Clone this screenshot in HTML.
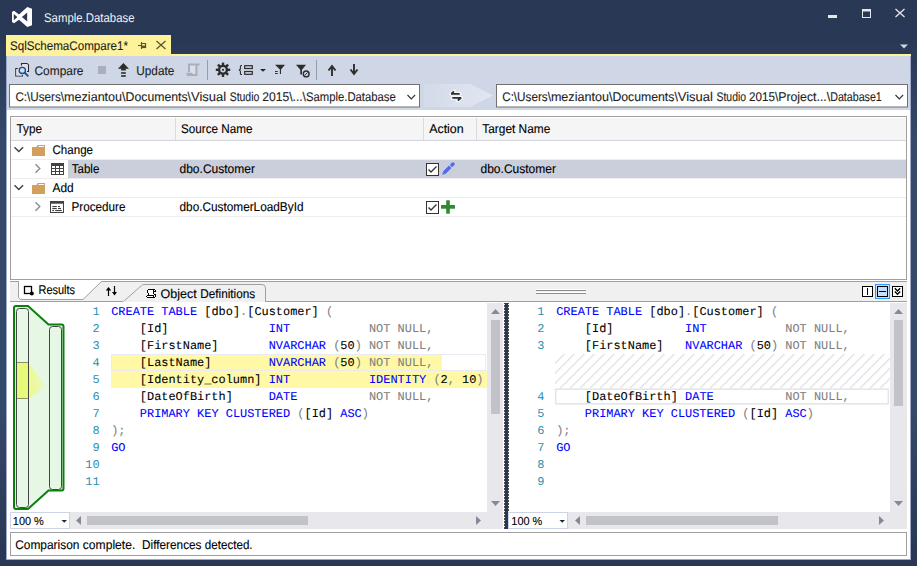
<!DOCTYPE html><html><head><meta charset="utf-8"><style>html,body{margin:0;padding:0;background:#293955;overflow:hidden}svg{display:block}</style></head><body><svg width="917" height="566" viewBox="0 0 917 566" text-rendering="geometricPrecision"><defs><linearGradient id="envg" x1="0" x2="0" y1="0" y2="566" gradientUnits="userSpaceOnUse"><stop offset="0.07" stop-color="#293955"/><stop offset="0.25" stop-color="#35496A"/><stop offset="0.72" stop-color="#35496A"/><stop offset="0.97" stop-color="#293955"/></linearGradient></defs>
<rect x="0" y="0" width="917" height="566" fill="url(#envg)" />
<rect x="0" y="0" width="917" height="35" fill="#293955" />
<path d="M27.3,7 L32,8.7 V25.2 L27.3,27 L19,19.8 L14,23.2 L12,22 V12 L14,10.8 L19,14.6 Z M27.2,12.4 V21.6 L21.9,17 Z M13.8,13.9 V20.3 L17.3,17.1 Z" fill="#FFFFFF" fill-rule="evenodd"/>
<text x="44" y="22" font-family="Liberation Sans" font-size="12.6" fill="#F1F1F1" stroke="#F1F1F1" stroke-width="0" textLength="90.5" lengthAdjust="spacingAndGlyphs" >Sample.Database</text>
<rect x="828" y="15" width="9" height="3" fill="#E6E7EA" />
<rect x="862.5" y="9.5" width="8" height="8" fill="none" stroke="#E6E7EA" stroke-width="1"/>
<rect x="862" y="9" width="9" height="2.5" fill="#E6E7EA" />
<path d="M895.5,9 L904.5,17 M904.5,9 L895.5,17" stroke="#E6E7EA" stroke-width="1.3"/>
<rect x="6" y="35" width="165" height="21" fill="#FFF29D" />
<rect x="6" y="54" width="905" height="2" fill="#FFF29D" />
<text x="10" y="50" font-family="Liberation Sans" font-size="12.6" fill="#1E1E1E" stroke="#1E1E1E" stroke-width="0.12" textLength="118" lengthAdjust="spacingAndGlyphs" >SqlSchemaCompare1*</text>
<path d="M138,45.5 H141.5 M141.5,42 V49 M141.5,43.5 H145.5 V47.5 H141.5" stroke="#5B5530" stroke-width="1.2" fill="none"/>
<rect x="141" y="45.6" width="5.1" height="2.5" fill="#5B5530" />
<path d="M156.5,41 L165.5,49 M165.5,41 L156.5,49" stroke="#5B5530" stroke-width="1.3"/>
<path d="M900,44.5 H908 L904,48.5 Z" fill="#CED4DD"/>
<rect x="6" y="56" width="905" height="504" fill="#FFFFFF" />
<rect x="6" y="56" width="905" height="54" fill="#CFD6E5" />
<rect x="6" y="56" width="1" height="504" fill="#9DA9C9" />
<rect x="910" y="56" width="1" height="504" fill="#9DA9C9" />
<rect x="6" y="559" width="905" height="1" fill="#9DA9C9" />
<path d="M21.5,65.5 V63.5 H27 L28.5,65 V71.5 H27" fill="none" stroke="#2A2A2A" stroke-width="1.1"/>
<path d="M17.8,68.5 H15.8 V76 H22.4 V75" fill="none" stroke="#2A2A2A" stroke-width="1.1"/>
<path d="M16.3,69 H22 V75.5 H16.3 Z M22,64 H27 L28,65 V71 H22 Z" fill="#DCDEE8"/>
<circle cx="22.3" cy="70.4" r="3.1" fill="#DADDE6" stroke="#0A4AA6" stroke-width="1.3"/>
<path d="M24.6,72.7 L28.3,76.4" stroke="#0A4AA6" stroke-width="1.7"/>
<text x="34.5" y="75" font-family="Liberation Sans" font-size="12.6" fill="#1E1E1E" stroke="#1E1E1E" stroke-width="0.12" textLength="49" lengthAdjust="spacingAndGlyphs" >Compare</text>
<rect x="98" y="66" width="8" height="8" fill="#A9AEBB" />
<path d="M123.4,63 L129,68.7 H125.8 V70.6 H121.1 V68.7 H117.9 Z" fill="#2D2D2D"/>
<rect x="121.1" y="72.2" width="4.7" height="1.6" fill="#2D2D2D" />
<rect x="121.1" y="75.2" width="4.7" height="1.6" fill="#2D2D2D" />
<text x="136.3" y="75" font-family="Liberation Sans" font-size="12.6" fill="#1E1E1E" stroke="#1E1E1E" stroke-width="0.12" textLength="38" lengthAdjust="spacingAndGlyphs" >Update</text>
<path d="M190,65 H196 V74.5 H191 V72 H189 V65 Z" fill="#DCDFE8"/>
<path d="M189,72 V64.5 H199.5 M196.4,65.5 V75 H187 M186.5,73.8 H192.5" fill="none" stroke="#A9AEBC" stroke-width="2"/>
<rect x="207" y="60" width="1" height="20" fill="#939CB0" />
<rect x="221.8" y="62.6" width="2.4" height="3.5" fill="#2D2D2D" transform="rotate(0 223 69.8)"/><rect x="221.8" y="62.6" width="2.4" height="3.5" fill="#2D2D2D" transform="rotate(45 223 69.8)"/><rect x="221.8" y="62.6" width="2.4" height="3.5" fill="#2D2D2D" transform="rotate(90 223 69.8)"/><rect x="221.8" y="62.6" width="2.4" height="3.5" fill="#2D2D2D" transform="rotate(135 223 69.8)"/><rect x="221.8" y="62.6" width="2.4" height="3.5" fill="#2D2D2D" transform="rotate(180 223 69.8)"/><rect x="221.8" y="62.6" width="2.4" height="3.5" fill="#2D2D2D" transform="rotate(225 223 69.8)"/><rect x="221.8" y="62.6" width="2.4" height="3.5" fill="#2D2D2D" transform="rotate(270 223 69.8)"/><rect x="221.8" y="62.6" width="2.4" height="3.5" fill="#2D2D2D" transform="rotate(315 223 69.8)"/>
<circle cx="223" cy="69.8" r="5.1" fill="#2D2D2D"/>
<circle cx="223" cy="69.8" r="2.7" fill="#CFD6E5"/>
<circle cx="223" cy="69.8" r="1.1" fill="#2D2D2D"/>
<path d="M242,65.5 H241.2 Q240.4,65.5 240.4,66.5 V69 L239.3,70 L240.4,71 V73.5 Q240.4,74.5 241.2,74.5 H242" fill="none" stroke="#2D2D2D" stroke-width="1.1"/>
<rect x="244.7" y="65.7" width="7.6" height="2.8" fill="none" stroke="#2D2D2D" stroke-width="1.2"/>
<rect x="244.7" y="71.5" width="7.6" height="2.8" fill="none" stroke="#2D2D2D" stroke-width="1.2"/>
<path d="M260,69 H266 L263,71.8 Z" fill="#1B2640"/>
<path d="M275,64.8 H285 L281,69.6 V73.9 H279.9 V69.6 Z" fill="#2D2D2D"/>
<rect x="275" y="71" width="2.7" height="1" fill="#2D2D2D" />
<rect x="275" y="73" width="2.7" height="1" fill="#2D2D2D" />
<path d="M296,64.8 H306 L302,69.8 V74.6 H300.3 V69.8 Z" fill="#2D2D2D"/>
<circle cx="306.2" cy="73.9" r="2.9" fill="#CFD6E5" stroke="#2D2D2D" stroke-width="1.4"/>
<path d="M304.6,75.5 L307.8,72.3" stroke="#2D2D2D" stroke-width="1"/>
<rect x="316" y="60" width="1" height="20" fill="#939CB0" />
<path d="M332,76 V66.5 M328.5,70.5 L332,66 L335.5,70.5" fill="none" stroke="#2D2D2D" stroke-width="1.9"/>
<path d="M354,64 V74 M350.5,69.5 L354,74 L357.5,69.5" fill="none" stroke="#2D2D2D" stroke-width="1.9"/>
<rect x="9.5" y="84.5" width="410" height="22.5" fill="#FFFFFF" stroke="#717171" stroke-width="1"/>
<text x="15.4" y="101" font-family="Liberation Sans" font-size="12.6" fill="#1E1E1E" stroke="#1E1E1E" stroke-width="0.12" textLength="48.7" lengthAdjust="spacingAndGlyphs" xml:space="preserve">C:\Users\</text>
<text x="64.1" y="101" font-family="Liberation Sans" font-size="12.6" fill="#1E1E1E" stroke="#1E1E1E" stroke-width="0.12" textLength="61.5" lengthAdjust="spacingAndGlyphs" xml:space="preserve">meziantou\</text>
<text x="125.6" y="101" font-family="Liberation Sans" font-size="12.6" fill="#1E1E1E" stroke="#1E1E1E" stroke-width="0.12" textLength="65.4" lengthAdjust="spacingAndGlyphs" xml:space="preserve">Documents\</text>
<text x="191.0" y="101" font-family="Liberation Sans" font-size="12.6" fill="#1E1E1E" stroke="#1E1E1E" stroke-width="0.12" textLength="38.7" lengthAdjust="spacingAndGlyphs" xml:space="preserve">Visual </text>
<text x="229.7" y="101" font-family="Liberation Sans" font-size="12.6" fill="#1E1E1E" stroke="#1E1E1E" stroke-width="0.12" textLength="32.5" lengthAdjust="spacingAndGlyphs" xml:space="preserve">Studio </text>
<text x="262.2" y="101" font-family="Liberation Sans" font-size="12.6" fill="#1E1E1E" stroke="#1E1E1E" stroke-width="0.12" textLength="43.8" lengthAdjust="spacingAndGlyphs" xml:space="preserve">2015\...\</text>
<text x="306.0" y="101" font-family="Liberation Sans" font-size="12.6" fill="#1E1E1E" stroke="#1E1E1E" stroke-width="0.12" textLength="89.8" lengthAdjust="spacingAndGlyphs" xml:space="preserve">Sample.Database</text>
<path d="M407.5,95 L411.3,99 L415.1,95" fill="none" stroke="#333" stroke-width="1.1"/>
<defs><linearGradient id="arw" x1="0" x2="1" y1="0" y2="0"><stop offset="0" stop-color="#D3DAE8"/><stop offset="1" stop-color="#E2E7F1"/></linearGradient></defs>
<path d="M424,84 H470 L493,95.5 L470,107 H424 Z" fill="url(#arw)"/>
<path d="M451,93.8 H459.7 M451.2,93.8 L454,91.3 M461.3,97.9 H452.3 M461.1,97.9 L457.7,100.5" fill="none" stroke="#FFFFFF" stroke-width="3.6" stroke-linecap="round" opacity="0.8"/>
<path d="M451,93.8 H459.7 M451.2,93.8 L454,91.3 M461.3,97.9 H452.3 M461.1,97.9 L457.7,100.5" fill="none" stroke="#2D2D2D" stroke-width="1.8"/>
<rect x="496.5" y="84.5" width="411" height="22.5" fill="#FFFFFF" stroke="#717171" stroke-width="1"/>
<text x="502.2" y="101" font-family="Liberation Sans" font-size="12.6" fill="#1E1E1E" stroke="#1E1E1E" stroke-width="0.12" textLength="48.7" lengthAdjust="spacingAndGlyphs" xml:space="preserve">C:\Users\</text>
<text x="550.9" y="101" font-family="Liberation Sans" font-size="12.6" fill="#1E1E1E" stroke="#1E1E1E" stroke-width="0.12" textLength="61.5" lengthAdjust="spacingAndGlyphs" xml:space="preserve">meziantou\</text>
<text x="612.4" y="101" font-family="Liberation Sans" font-size="12.6" fill="#1E1E1E" stroke="#1E1E1E" stroke-width="0.12" textLength="65.4" lengthAdjust="spacingAndGlyphs" xml:space="preserve">Documents\</text>
<text x="677.8" y="101" font-family="Liberation Sans" font-size="12.6" fill="#1E1E1E" stroke="#1E1E1E" stroke-width="0.12" textLength="38.7" lengthAdjust="spacingAndGlyphs" xml:space="preserve">Visual </text>
<text x="716.5" y="101" font-family="Liberation Sans" font-size="12.6" fill="#1E1E1E" stroke="#1E1E1E" stroke-width="0.12" textLength="32.5" lengthAdjust="spacingAndGlyphs" xml:space="preserve">Studio </text>
<text x="749.0" y="101" font-family="Liberation Sans" font-size="12.6" fill="#1E1E1E" stroke="#1E1E1E" stroke-width="0.12" textLength="29.2" lengthAdjust="spacingAndGlyphs" xml:space="preserve">2015\</text>
<text x="778.2" y="101" font-family="Liberation Sans" font-size="12.6" fill="#1E1E1E" stroke="#1E1E1E" stroke-width="0.12" textLength="52.0" lengthAdjust="spacingAndGlyphs" xml:space="preserve">Project...\</text>
<text x="830.2" y="101" font-family="Liberation Sans" font-size="12.6" fill="#1E1E1E" stroke="#1E1E1E" stroke-width="0.12" textLength="51.6" lengthAdjust="spacingAndGlyphs" xml:space="preserve">Database1</text>
<path d="M895.5,95 L899.3,99 L903.1,95" fill="none" stroke="#333" stroke-width="1.1"/>
<rect x="10.5" y="116.5" width="896" height="163" fill="#FFFFFF" stroke="#A0A0A0" stroke-width="1"/>
<rect x="11" y="117" width="895" height="23" fill="#F5F5F5" />
<rect x="11" y="117" width="895" height="1" fill="#FFFFFF" />
<rect x="11" y="140" width="895" height="1" fill="#D3D5E0" />
<rect x="175" y="118" width="1" height="22" fill="#DADAE2" />
<rect x="423" y="118" width="1" height="22" fill="#DADAE2" />
<rect x="476" y="118" width="1" height="22" fill="#DADAE2" />
<text x="16.5" y="133" font-family="Liberation Sans" font-size="12.6" fill="#000000" stroke="#000000" stroke-width="0.12" textLength="25.5" lengthAdjust="spacingAndGlyphs" >Type</text>
<text x="181" y="133" font-family="Liberation Sans" font-size="12.6" fill="#000000" stroke="#000000" stroke-width="0.12" textLength="71.5" lengthAdjust="spacingAndGlyphs" >Source Name</text>
<text x="429.2" y="133" font-family="Liberation Sans" font-size="12.6" fill="#000000" stroke="#000000" stroke-width="0.12" textLength="34.5" lengthAdjust="spacingAndGlyphs" >Action</text>
<text x="482.3" y="133" font-family="Liberation Sans" font-size="12.6" fill="#000000" stroke="#000000" stroke-width="0.12" textLength="68" lengthAdjust="spacingAndGlyphs" >Target Name</text>
<rect x="11" y="159" width="895" height="1" fill="#EDEDED" />
<rect x="11" y="178" width="895" height="1" fill="#EDEDED" />
<rect x="11" y="197" width="895" height="1" fill="#EDEDED" />
<rect x="11" y="216" width="895" height="1" fill="#EDEDED" />
<rect x="68" y="160" width="838" height="18" fill="#CBCEDB" />
<path d="M14.5,147.2 L18.8,151.5 L23.1,147.2" fill="none" stroke="#404040" stroke-width="1.4"/>
<path d="M32,147 H36.4 L37.6,145 H45 V156 H32 Z" fill="#D29F5E"/>
<rect x="38.5" y="146" width="5.5" height="1" fill="#FFFFFF" />
<text x="52.5" y="154" font-family="Liberation Sans" font-size="12.6" fill="#000000" stroke="#000000" stroke-width="0.12" textLength="40.5" lengthAdjust="spacingAndGlyphs" >Change</text>
<path d="M35.5,164.2 L39.8,168.5 L35.5,172.79999999999998" fill="none" stroke="#8C8C8C" stroke-width="1.4"/>
<rect x="51" y="163" width="13" height="12" fill="#424242" />
<rect x="52" y="166" width="3" height="2" fill="#FFFFFF" />
<rect x="52" y="169" width="3" height="2" fill="#FFFFFF" />
<rect x="52" y="172" width="3" height="2" fill="#FFFFFF" />
<rect x="56" y="166" width="3" height="2" fill="#FFFFFF" />
<rect x="56" y="169" width="3" height="2" fill="#FFFFFF" />
<rect x="56" y="172" width="3" height="2" fill="#FFFFFF" />
<rect x="60" y="166" width="3" height="2" fill="#FFFFFF" />
<rect x="60" y="169" width="3" height="2" fill="#FFFFFF" />
<rect x="60" y="172" width="3" height="2" fill="#FFFFFF" />
<text x="71.8" y="173" font-family="Liberation Sans" font-size="12.6" fill="#000000" stroke="#000000" stroke-width="0.12" textLength="27.5" lengthAdjust="spacingAndGlyphs" >Table</text>
<text x="179.5" y="173" font-family="Liberation Sans" font-size="12.6" fill="#000000" stroke="#000000" stroke-width="0.12" textLength="75.5" lengthAdjust="spacingAndGlyphs" >dbo.Customer</text>
<text x="480.5" y="173" font-family="Liberation Sans" font-size="12.6" fill="#000000" stroke="#000000" stroke-width="0.12" textLength="75.5" lengthAdjust="spacingAndGlyphs" >dbo.Customer</text>
<path d="M14.5,185.2 L18.8,189.5 L23.1,185.2" fill="none" stroke="#404040" stroke-width="1.4"/>
<path d="M32,185 H36.4 L37.6,183 H45 V194 H32 Z" fill="#D29F5E"/>
<rect x="38.5" y="184" width="5.5" height="1" fill="#FFFFFF" />
<text x="52.5" y="192" font-family="Liberation Sans" font-size="12.6" fill="#000000" stroke="#000000" stroke-width="0.12" textLength="21.2" lengthAdjust="spacingAndGlyphs" >Add</text>
<path d="M35.5,202.2 L39.8,206.5 L35.5,210.79999999999998" fill="none" stroke="#8C8C8C" stroke-width="1.4"/>
<rect x="50.5" y="201.5" width="13" height="11" fill="#FFFFFF" stroke="#424242" stroke-width="1"/>
<rect x="50" y="201" width="14" height="2.7" fill="#424242" />
<rect x="52.3" y="206" width="4.5" height="1.1" fill="#424242" />
<rect x="58" y="206" width="2" height="1.1" fill="#424242" />
<rect x="52.3" y="208" width="4.5" height="1.1" fill="#424242" />
<rect x="58" y="208" width="3" height="1.1" fill="#424242" />
<rect x="52.3" y="210" width="1.7000000000000028" height="1.1" fill="#424242" />
<rect x="55.2" y="210" width="6.599999999999994" height="1.1" fill="#424242" />
<text x="71.5" y="211" font-family="Liberation Sans" font-size="12.6" fill="#000000" stroke="#000000" stroke-width="0.12" textLength="54" lengthAdjust="spacingAndGlyphs" >Procedure</text>
<text x="179.5" y="211" font-family="Liberation Sans" font-size="12.6" fill="#000000" stroke="#000000" stroke-width="0.12" textLength="124" lengthAdjust="spacingAndGlyphs" >dbo.CustomerLoadById</text>
<rect x="426.5" y="163.5" width="12" height="12" fill="#FFFFFF" stroke="#333333" stroke-width="1"/>
<path d="M428.5,169.5 L431,172 L436.5,166.5" fill="none" stroke="#333333" stroke-width="1.4"/>
<rect x="426.5" y="201.5" width="12" height="12" fill="#FFFFFF" stroke="#333333" stroke-width="1"/>
<path d="M428.5,207.5 L431,210 L436.5,204.5" fill="none" stroke="#333333" stroke-width="1.4"/>
<path d="M442.2,174.8 L442.9,171.9 L445.1,174.1 Z" fill="#4F6BED"/>
<path d="M444,173 L450.2,166.8" stroke="#4F6BED" stroke-width="3.4"/>
<path d="M452,165 L453,164" stroke="#4F6BED" stroke-width="3.4" stroke-linecap="round"/>
<rect x="441" y="205" width="14" height="3.7" fill="#2E8B2E" />
<rect x="446.2" y="200.3" width="3.6" height="13.4" fill="#2E8B2E" />
<rect x="10" y="280" width="897" height="1" fill="#FFFFFF" />
<rect x="10" y="281" width="897" height="21" fill="#F0F0F0" />
<rect x="10" y="281" width="897" height="1" fill="#A0A0A0" />
<path d="M18.5,281 V297.5 L20.5,299.5 H83 L101.5,281.5" fill="#FFFFFF" stroke="#A0A0A0" stroke-width="1"/>
<rect x="19" y="280" width="82" height="2" fill="#FFFFFF" />
<rect x="10" y="301" width="113" height="1" fill="#A0A0A0" />
<rect x="265" y="301" width="642" height="1" fill="#A0A0A0" />
<path d="M123.5,301.5 L141.5,285.5 Q142.5,284.5 144,284.5 H262 Q265.5,284.5 265.5,288 V301.5" fill="#F0F0F0" stroke="#A0A0A0" stroke-width="1"/>
<rect x="124" y="301" width="141" height="1" fill="#F0F0F0" />
<rect x="24.5" y="286.5" width="7" height="7" fill="#FFFFFF" stroke="#000" stroke-width="1.3"/>
<circle cx="31.8" cy="293.4" r="2" fill="#000"/>
<text x="38.5" y="294" font-family="Liberation Sans" font-size="12.6" fill="#000000" stroke="#000000" stroke-width="0.12" textLength="36.5" lengthAdjust="spacingAndGlyphs" >Results</text>
<path d="M108.5,296 V289.5 M114.5,286 V292.5" fill="none" stroke="#000" stroke-width="1.2"/>
<path d="M105.8,290.5 H111.2 L108.5,287 Z M112,292 H117 L114.5,295.5 Z" fill="#000"/>
<rect x="148" y="290" width="5" height="5" fill="#FFFFFF" />
<rect x="147" y="296" width="6" height="1" fill="#FFFFFF" />
<rect x="148" y="289" width="7" height="1" fill="#000000" />
<rect x="147" y="290" width="1" height="3" fill="#000000" />
<rect x="148" y="293" width="1" height="2" fill="#000000" />
<rect x="153" y="290" width="1" height="4" fill="#000000" />
<rect x="155" y="290" width="1" height="1" fill="#000000" />
<rect x="154" y="291" width="2" height="1" fill="#000000" />
<rect x="154" y="294" width="2" height="1" fill="#000000" />
<rect x="147" y="295" width="7" height="1" fill="#000000" />
<rect x="155" y="295" width="1" height="2" fill="#000000" />
<rect x="146" y="296" width="1" height="1" fill="#000000" />
<rect x="153" y="296" width="1" height="1" fill="#000000" />
<rect x="147" y="297" width="8" height="1" fill="#000000" />
<text x="160.5" y="298" font-family="Liberation Sans" font-size="12.6" fill="#000000" stroke="#000000" stroke-width="0.12" textLength="39.7" lengthAdjust="spacingAndGlyphs" xml:space="preserve">Object </text>
<text x="200.2" y="298" font-family="Liberation Sans" font-size="12.6" fill="#000000" stroke="#000000" stroke-width="0.12" textLength="55" lengthAdjust="spacingAndGlyphs" >Definitions</text>
<rect x="536" y="289" width="50" height="1" fill="#FFFFFF" />
<rect x="536" y="290" width="50" height="1" fill="#8C8C8C" />
<rect x="536" y="292" width="50" height="1" fill="#FFFFFF" />
<rect x="536" y="293" width="50" height="1" fill="#8C8C8C" />
<rect x="862.5" y="286.5" width="10" height="10" fill="#FFFFFF" stroke="#000" stroke-width="1"/>
<rect x="867" y="288" width="1" height="7" fill="#000" />
<rect x="875.5" y="284.5" width="14" height="14" fill="#C5E0FC" stroke="#3399FF" stroke-width="1"/>
<rect x="877.5" y="286.5" width="10" height="10" fill="#C5E0FC" stroke="#000" stroke-width="1"/>
<rect x="879" y="291" width="7" height="1" fill="#000" />
<rect x="892.5" y="286.5" width="10" height="10" fill="#FFFFFF" stroke="#000" stroke-width="1"/>
<path d="M894.8,288.3 L897.5,291 L900.2,288.3 M894.8,291.6 L897.5,294.3 L900.2,291.6" fill="none" stroke="#000" stroke-width="1.4"/>
<rect x="111" y="354" width="331" height="17" fill="#FFF9A6" />
<rect x="111" y="371" width="376" height="17" fill="#FFF9A6" />
<rect x="111.5" y="354.5" width="374" height="16" fill="none" stroke="#EAEAF2" stroke-width="1"/>
<path d="M14,308 Q14,306 16,306 H28 L48.5,324.5 H61.5 Q63.5,324.5 63.5,326.5 V488.5 Q63.5,490.5 61.5,490.5 H48.5 L28,509 H16 Q14,509 14,507 Z" fill="#E6F7E6" stroke="#0B800B" stroke-width="2"/>
<rect x="16.5" y="308.5" width="12" height="199" rx="3" fill="#E6F7E6" stroke="#444" stroke-width="1"/>
<rect x="49.5" y="326.5" width="12" height="163" rx="3" fill="#E6F7E6" stroke="#444" stroke-width="1"/>
<defs><linearGradient id="gy" x1="0" x2="1" y1="0" y2="0"><stop offset="0" stop-color="#EEFA80" stop-opacity="0.9"/><stop offset="1" stop-color="#EEFA80" stop-opacity="0.15"/></linearGradient><pattern id="hatch" width="7.07" height="10" patternUnits="userSpaceOnUse" patternTransform="translate(553.5 354) rotate(45)"><rect x="0" y="0" width="1.2" height="10" fill="#DEDFE6"/></pattern></defs>
<path d="M29,364 L46.5,387 L29,398 Z" fill="url(#gy)"/>
<rect x="17" y="363" width="11" height="36" fill="#E8F878" />
<rect x="17" y="362" width="11" height="1" fill="#8E9466" />
<rect x="17" y="398" width="11" height="1" fill="#8E9466" />
<text x="99.6" y="315" font-family="Liberation Mono" font-size="11.93" fill="#2B91AF" text-anchor="end">1</text>
<text x="111.20" y="315" font-family="Liberation Mono" font-size="11.93" fill="#0000FF" stroke="#0000FF" stroke-width="0.08" xml:space="preserve">CREATE</text>
<text x="161.32" y="315" font-family="Liberation Mono" font-size="11.93" fill="#0000FF" stroke="#0000FF" stroke-width="0.08" xml:space="preserve">TABLE</text>
<text x="204.28" y="315" font-family="Liberation Mono" font-size="11.93" fill="#000000" stroke="#000000" stroke-width="0.08" xml:space="preserve">[dbo]</text>
<text x="240.08" y="315" font-family="Liberation Mono" font-size="11.93" fill="#808080" stroke="#808080" stroke-width="0.08" xml:space="preserve">.</text>
<text x="247.24" y="315" font-family="Liberation Mono" font-size="11.93" fill="#000000" stroke="#000000" stroke-width="0.08" xml:space="preserve">[Customer]</text>
<text x="326.00" y="315" font-family="Liberation Mono" font-size="11.93" fill="#808080" stroke="#808080" stroke-width="0.08" xml:space="preserve">(</text>
<text x="99.6" y="332" font-family="Liberation Mono" font-size="11.93" fill="#2B91AF" text-anchor="end">2</text>
<text x="139.84" y="332" font-family="Liberation Mono" font-size="11.93" fill="#000000" stroke="#000000" stroke-width="0.08" xml:space="preserve">[Id]</text>
<text x="268.72" y="332" font-family="Liberation Mono" font-size="11.93" fill="#0000FF" stroke="#0000FF" stroke-width="0.08" xml:space="preserve">INT</text>
<text x="368.96" y="332" font-family="Liberation Mono" font-size="11.93" fill="#808080" stroke="#808080" stroke-width="0.08" xml:space="preserve">NOT</text>
<text x="397.60" y="332" font-family="Liberation Mono" font-size="11.93" fill="#808080" stroke="#808080" stroke-width="0.08" xml:space="preserve">NULL</text>
<text x="426.24" y="332" font-family="Liberation Mono" font-size="11.93" fill="#808080" stroke="#808080" stroke-width="0.08" xml:space="preserve">,</text>
<text x="99.6" y="349" font-family="Liberation Mono" font-size="11.93" fill="#2B91AF" text-anchor="end">3</text>
<text x="139.84" y="349" font-family="Liberation Mono" font-size="11.93" fill="#000000" stroke="#000000" stroke-width="0.08" xml:space="preserve">[FirstName]</text>
<text x="268.72" y="349" font-family="Liberation Mono" font-size="11.93" fill="#0000FF" stroke="#0000FF" stroke-width="0.08" xml:space="preserve">NVARCHAR</text>
<text x="333.16" y="349" font-family="Liberation Mono" font-size="11.93" fill="#808080" stroke="#808080" stroke-width="0.08" xml:space="preserve">(</text>
<text x="340.32" y="349" font-family="Liberation Mono" font-size="11.93" fill="#000000" stroke="#000000" stroke-width="0.08" xml:space="preserve">50</text>
<text x="354.64" y="349" font-family="Liberation Mono" font-size="11.93" fill="#808080" stroke="#808080" stroke-width="0.08" xml:space="preserve">)</text>
<text x="368.96" y="349" font-family="Liberation Mono" font-size="11.93" fill="#808080" stroke="#808080" stroke-width="0.08" xml:space="preserve">NOT</text>
<text x="397.60" y="349" font-family="Liberation Mono" font-size="11.93" fill="#808080" stroke="#808080" stroke-width="0.08" xml:space="preserve">NULL</text>
<text x="426.24" y="349" font-family="Liberation Mono" font-size="11.93" fill="#808080" stroke="#808080" stroke-width="0.08" xml:space="preserve">,</text>
<text x="99.6" y="366" font-family="Liberation Mono" font-size="11.93" fill="#2B91AF" text-anchor="end">4</text>
<text x="139.84" y="366" font-family="Liberation Mono" font-size="11.93" fill="#000000" stroke="#000000" stroke-width="0.08" xml:space="preserve">[LastName]</text>
<text x="268.72" y="366" font-family="Liberation Mono" font-size="11.93" fill="#0000FF" stroke="#0000FF" stroke-width="0.08" xml:space="preserve">NVARCHAR</text>
<text x="333.16" y="366" font-family="Liberation Mono" font-size="11.93" fill="#808080" stroke="#808080" stroke-width="0.08" xml:space="preserve">(</text>
<text x="340.32" y="366" font-family="Liberation Mono" font-size="11.93" fill="#000000" stroke="#000000" stroke-width="0.08" xml:space="preserve">50</text>
<text x="354.64" y="366" font-family="Liberation Mono" font-size="11.93" fill="#808080" stroke="#808080" stroke-width="0.08" xml:space="preserve">)</text>
<text x="368.96" y="366" font-family="Liberation Mono" font-size="11.93" fill="#808080" stroke="#808080" stroke-width="0.08" xml:space="preserve">NOT</text>
<text x="397.60" y="366" font-family="Liberation Mono" font-size="11.93" fill="#808080" stroke="#808080" stroke-width="0.08" xml:space="preserve">NULL</text>
<text x="426.24" y="366" font-family="Liberation Mono" font-size="11.93" fill="#808080" stroke="#808080" stroke-width="0.08" xml:space="preserve">,</text>
<text x="99.6" y="383" font-family="Liberation Mono" font-size="11.93" fill="#2B91AF" text-anchor="end">5</text>
<text x="139.84" y="383" font-family="Liberation Mono" font-size="11.93" fill="#000000" stroke="#000000" stroke-width="0.08" xml:space="preserve">[Identity_column]</text>
<text x="268.72" y="383" font-family="Liberation Mono" font-size="11.93" fill="#0000FF" stroke="#0000FF" stroke-width="0.08" xml:space="preserve">INT</text>
<text x="368.96" y="383" font-family="Liberation Mono" font-size="11.93" fill="#0000FF" stroke="#0000FF" stroke-width="0.08" xml:space="preserve">IDENTITY</text>
<text x="433.40" y="383" font-family="Liberation Mono" font-size="11.93" fill="#808080" stroke="#808080" stroke-width="0.08" xml:space="preserve">(</text>
<text x="440.56" y="383" font-family="Liberation Mono" font-size="11.93" fill="#000000" stroke="#000000" stroke-width="0.08" xml:space="preserve">2</text>
<text x="447.72" y="383" font-family="Liberation Mono" font-size="11.93" fill="#808080" stroke="#808080" stroke-width="0.08" xml:space="preserve">,</text>
<text x="462.04" y="383" font-family="Liberation Mono" font-size="11.93" fill="#000000" stroke="#000000" stroke-width="0.08" xml:space="preserve">10</text>
<text x="476.36" y="383" font-family="Liberation Mono" font-size="11.93" fill="#808080" stroke="#808080" stroke-width="0.08" xml:space="preserve">)</text>
<text x="99.6" y="400" font-family="Liberation Mono" font-size="11.93" fill="#2B91AF" text-anchor="end">6</text>
<text x="139.84" y="400" font-family="Liberation Mono" font-size="11.93" fill="#000000" stroke="#000000" stroke-width="0.08" xml:space="preserve">[DateOfBirth]</text>
<text x="268.72" y="400" font-family="Liberation Mono" font-size="11.93" fill="#0000FF" stroke="#0000FF" stroke-width="0.08" xml:space="preserve">DATE</text>
<text x="368.96" y="400" font-family="Liberation Mono" font-size="11.93" fill="#808080" stroke="#808080" stroke-width="0.08" xml:space="preserve">NOT</text>
<text x="397.60" y="400" font-family="Liberation Mono" font-size="11.93" fill="#808080" stroke="#808080" stroke-width="0.08" xml:space="preserve">NULL</text>
<text x="426.24" y="400" font-family="Liberation Mono" font-size="11.93" fill="#808080" stroke="#808080" stroke-width="0.08" xml:space="preserve">,</text>
<text x="99.6" y="417" font-family="Liberation Mono" font-size="11.93" fill="#2B91AF" text-anchor="end">7</text>
<text x="139.84" y="417" font-family="Liberation Mono" font-size="11.93" fill="#0000FF" stroke="#0000FF" stroke-width="0.08" xml:space="preserve">PRIMARY</text>
<text x="197.12" y="417" font-family="Liberation Mono" font-size="11.93" fill="#0000FF" stroke="#0000FF" stroke-width="0.08" xml:space="preserve">KEY</text>
<text x="225.76" y="417" font-family="Liberation Mono" font-size="11.93" fill="#0000FF" stroke="#0000FF" stroke-width="0.08" xml:space="preserve">CLUSTERED</text>
<text x="297.36" y="417" font-family="Liberation Mono" font-size="11.93" fill="#808080" stroke="#808080" stroke-width="0.08" xml:space="preserve">(</text>
<text x="304.52" y="417" font-family="Liberation Mono" font-size="11.93" fill="#000000" stroke="#000000" stroke-width="0.08" xml:space="preserve">[Id]</text>
<text x="340.32" y="417" font-family="Liberation Mono" font-size="11.93" fill="#0000FF" stroke="#0000FF" stroke-width="0.08" xml:space="preserve">ASC</text>
<text x="361.80" y="417" font-family="Liberation Mono" font-size="11.93" fill="#808080" stroke="#808080" stroke-width="0.08" xml:space="preserve">)</text>
<text x="99.6" y="434" font-family="Liberation Mono" font-size="11.93" fill="#2B91AF" text-anchor="end">8</text>
<text x="111.20" y="434" font-family="Liberation Mono" font-size="11.93" fill="#808080" stroke="#808080" stroke-width="0.08" xml:space="preserve">)</text>
<text x="118.36" y="434" font-family="Liberation Mono" font-size="11.93" fill="#808080" stroke="#808080" stroke-width="0.08" xml:space="preserve">;</text>
<text x="99.6" y="451" font-family="Liberation Mono" font-size="11.93" fill="#2B91AF" text-anchor="end">9</text>
<text x="111.20" y="451" font-family="Liberation Mono" font-size="11.93" fill="#0000FF" stroke="#0000FF" stroke-width="0.08" xml:space="preserve">GO</text>
<text x="99.6" y="468" font-family="Liberation Mono" font-size="11.93" fill="#2B91AF" text-anchor="end">10</text>
<text x="99.6" y="485" font-family="Liberation Mono" font-size="11.93" fill="#2B91AF" text-anchor="end">11</text>
<rect x="555" y="354" width="335" height="34" fill="url(#hatch)" />
<rect x="555.7" y="389.2" width="332.6" height="14.6" fill="none" stroke="#E4E4E4" stroke-width="1.5"/>
<text x="544.3" y="315" font-family="Liberation Mono" font-size="11.93" fill="#2B91AF" text-anchor="end">1</text>
<text x="556.20" y="315" font-family="Liberation Mono" font-size="11.93" fill="#0000FF" stroke="#0000FF" stroke-width="0.08" xml:space="preserve">CREATE</text>
<text x="606.32" y="315" font-family="Liberation Mono" font-size="11.93" fill="#0000FF" stroke="#0000FF" stroke-width="0.08" xml:space="preserve">TABLE</text>
<text x="649.28" y="315" font-family="Liberation Mono" font-size="11.93" fill="#000000" stroke="#000000" stroke-width="0.08" xml:space="preserve">[dbo]</text>
<text x="685.08" y="315" font-family="Liberation Mono" font-size="11.93" fill="#808080" stroke="#808080" stroke-width="0.08" xml:space="preserve">.</text>
<text x="692.24" y="315" font-family="Liberation Mono" font-size="11.93" fill="#000000" stroke="#000000" stroke-width="0.08" xml:space="preserve">[Customer]</text>
<text x="771.00" y="315" font-family="Liberation Mono" font-size="11.93" fill="#808080" stroke="#808080" stroke-width="0.08" xml:space="preserve">(</text>
<text x="544.3" y="332" font-family="Liberation Mono" font-size="11.93" fill="#2B91AF" text-anchor="end">2</text>
<text x="584.84" y="332" font-family="Liberation Mono" font-size="11.93" fill="#000000" stroke="#000000" stroke-width="0.08" xml:space="preserve">[Id]</text>
<text x="685.08" y="332" font-family="Liberation Mono" font-size="11.93" fill="#0000FF" stroke="#0000FF" stroke-width="0.08" xml:space="preserve">INT</text>
<text x="785.32" y="332" font-family="Liberation Mono" font-size="11.93" fill="#808080" stroke="#808080" stroke-width="0.08" xml:space="preserve">NOT</text>
<text x="813.96" y="332" font-family="Liberation Mono" font-size="11.93" fill="#808080" stroke="#808080" stroke-width="0.08" xml:space="preserve">NULL</text>
<text x="842.60" y="332" font-family="Liberation Mono" font-size="11.93" fill="#808080" stroke="#808080" stroke-width="0.08" xml:space="preserve">,</text>
<text x="544.3" y="349" font-family="Liberation Mono" font-size="11.93" fill="#2B91AF" text-anchor="end">3</text>
<text x="584.84" y="349" font-family="Liberation Mono" font-size="11.93" fill="#000000" stroke="#000000" stroke-width="0.08" xml:space="preserve">[FirstName]</text>
<text x="685.08" y="349" font-family="Liberation Mono" font-size="11.93" fill="#0000FF" stroke="#0000FF" stroke-width="0.08" xml:space="preserve">NVARCHAR</text>
<text x="749.52" y="349" font-family="Liberation Mono" font-size="11.93" fill="#808080" stroke="#808080" stroke-width="0.08" xml:space="preserve">(</text>
<text x="756.68" y="349" font-family="Liberation Mono" font-size="11.93" fill="#000000" stroke="#000000" stroke-width="0.08" xml:space="preserve">50</text>
<text x="771.00" y="349" font-family="Liberation Mono" font-size="11.93" fill="#808080" stroke="#808080" stroke-width="0.08" xml:space="preserve">)</text>
<text x="785.32" y="349" font-family="Liberation Mono" font-size="11.93" fill="#808080" stroke="#808080" stroke-width="0.08" xml:space="preserve">NOT</text>
<text x="813.96" y="349" font-family="Liberation Mono" font-size="11.93" fill="#808080" stroke="#808080" stroke-width="0.08" xml:space="preserve">NULL</text>
<text x="842.60" y="349" font-family="Liberation Mono" font-size="11.93" fill="#808080" stroke="#808080" stroke-width="0.08" xml:space="preserve">,</text>
<text x="544.3" y="400" font-family="Liberation Mono" font-size="11.93" fill="#2B91AF" text-anchor="end">4</text>
<text x="584.84" y="400" font-family="Liberation Mono" font-size="11.93" fill="#000000" stroke="#000000" stroke-width="0.08" xml:space="preserve">[DateOfBirth]</text>
<text x="685.08" y="400" font-family="Liberation Mono" font-size="11.93" fill="#0000FF" stroke="#0000FF" stroke-width="0.08" xml:space="preserve">DATE</text>
<text x="785.32" y="400" font-family="Liberation Mono" font-size="11.93" fill="#808080" stroke="#808080" stroke-width="0.08" xml:space="preserve">NOT</text>
<text x="813.96" y="400" font-family="Liberation Mono" font-size="11.93" fill="#808080" stroke="#808080" stroke-width="0.08" xml:space="preserve">NULL</text>
<text x="842.60" y="400" font-family="Liberation Mono" font-size="11.93" fill="#808080" stroke="#808080" stroke-width="0.08" xml:space="preserve">,</text>
<text x="544.3" y="417" font-family="Liberation Mono" font-size="11.93" fill="#2B91AF" text-anchor="end">5</text>
<text x="584.84" y="417" font-family="Liberation Mono" font-size="11.93" fill="#0000FF" stroke="#0000FF" stroke-width="0.08" xml:space="preserve">PRIMARY</text>
<text x="642.12" y="417" font-family="Liberation Mono" font-size="11.93" fill="#0000FF" stroke="#0000FF" stroke-width="0.08" xml:space="preserve">KEY</text>
<text x="670.76" y="417" font-family="Liberation Mono" font-size="11.93" fill="#0000FF" stroke="#0000FF" stroke-width="0.08" xml:space="preserve">CLUSTERED</text>
<text x="742.36" y="417" font-family="Liberation Mono" font-size="11.93" fill="#808080" stroke="#808080" stroke-width="0.08" xml:space="preserve">(</text>
<text x="749.52" y="417" font-family="Liberation Mono" font-size="11.93" fill="#000000" stroke="#000000" stroke-width="0.08" xml:space="preserve">[Id]</text>
<text x="785.32" y="417" font-family="Liberation Mono" font-size="11.93" fill="#0000FF" stroke="#0000FF" stroke-width="0.08" xml:space="preserve">ASC</text>
<text x="806.80" y="417" font-family="Liberation Mono" font-size="11.93" fill="#808080" stroke="#808080" stroke-width="0.08" xml:space="preserve">)</text>
<text x="544.3" y="434" font-family="Liberation Mono" font-size="11.93" fill="#2B91AF" text-anchor="end">6</text>
<text x="556.20" y="434" font-family="Liberation Mono" font-size="11.93" fill="#808080" stroke="#808080" stroke-width="0.08" xml:space="preserve">)</text>
<text x="563.36" y="434" font-family="Liberation Mono" font-size="11.93" fill="#808080" stroke="#808080" stroke-width="0.08" xml:space="preserve">;</text>
<text x="544.3" y="451" font-family="Liberation Mono" font-size="11.93" fill="#2B91AF" text-anchor="end">7</text>
<text x="556.20" y="451" font-family="Liberation Mono" font-size="11.93" fill="#0000FF" stroke="#0000FF" stroke-width="0.08" xml:space="preserve">GO</text>
<text x="544.3" y="468" font-family="Liberation Mono" font-size="11.93" fill="#2B91AF" text-anchor="end">8</text>
<text x="544.3" y="485" font-family="Liberation Mono" font-size="11.93" fill="#2B91AF" text-anchor="end">9</text>
<rect x="487" y="303" width="16" height="226" fill="#E8E8EC" />
<path d="M491,314 L495.5,309 L500,314 Z" fill="#868999"/>
<rect x="491" y="320" width="9" height="94" fill="#C2C3C9" />
<path d="M491,501 L495.5,506 L500,501 Z" fill="#868999"/>
<rect x="70" y="512" width="417" height="17" fill="#E8E8EC" />
<path d="M81,516 L76,520.5 L81,525 Z" fill="#868999"/>
<rect x="87" y="516" width="221" height="9" fill="#C2C3C9" />
<path d="M476,516 L481,520.5 L476,525 Z" fill="#868999"/>
<rect x="10.5" y="512.5" width="59" height="16" fill="#FFFFFF" stroke="#CCD3E6" stroke-width="1"/>
<text x="12.8" y="525" font-family="Liberation Sans" font-size="11.6" fill="#000000" stroke="#000000" stroke-width="0.12" textLength="31" lengthAdjust="spacingAndGlyphs" >100 %</text>
<path d="M61.5,520 H67 L64.25,522.8 Z" fill="#1B2640"/>
<rect x="505" y="303" width="3" height="226" fill="#293955" />
<rect x="504" y="303" width="1" height="226" fill="#484848" />
<rect x="508" y="303" width="1" height="226" fill="#484848" />
<line x1="504.5" y1="304" x2="504.5" y2="529" stroke="#F0F0F0" stroke-width="1" stroke-dasharray="1 2"/>
<line x1="508.5" y1="304" x2="508.5" y2="529" stroke="#F0F0F0" stroke-width="1" stroke-dasharray="1 2"/>
<rect x="890" y="303" width="17" height="226" fill="#E8E8EC" />
<path d="M894,314 L898.5,309 L903,314 Z" fill="#868999"/>
<rect x="894" y="320" width="9" height="86" fill="#C2C3C9" />
<path d="M894,501 L898.5,506 L903,501 Z" fill="#868999"/>
<rect x="568" y="512" width="322" height="17" fill="#E8E8EC" />
<path d="M580,516 L575,520.5 L580,525 Z" fill="#868999"/>
<rect x="586" y="516" width="192" height="9" fill="#C2C3C9" />
<path d="M879,516 L884,520.5 L879,525 Z" fill="#868999"/>
<rect x="508.5" y="512.5" width="59" height="16" fill="#FFFFFF" stroke="#CCD3E6" stroke-width="1"/>
<text x="511.3" y="525" font-family="Liberation Sans" font-size="11.6" fill="#000000" stroke="#000000" stroke-width="0.12" textLength="31" lengthAdjust="spacingAndGlyphs" >100 %</text>
<path d="M559.5,520 H565 L562.25,522.8 Z" fill="#1B2640"/>
<rect x="10.5" y="532.5" width="896" height="23" fill="#FFFFFF" stroke="#A0A0A0" stroke-width="1"/>
<text x="15.2" y="549.2" font-family="Liberation Sans" font-size="12.6" fill="#000000" stroke="#000000" stroke-width="0.12" textLength="67.6" lengthAdjust="spacingAndGlyphs" xml:space="preserve">Comparison </text>
<text x="82.8" y="549.2" font-family="Liberation Sans" font-size="12.6" fill="#000000" stroke="#000000" stroke-width="0.12" textLength="59.2" lengthAdjust="spacingAndGlyphs" xml:space="preserve">complete.  </text>
<text x="142.0" y="549.2" font-family="Liberation Sans" font-size="12.6" fill="#000000" stroke="#000000" stroke-width="0.12" textLength="62.8" lengthAdjust="spacingAndGlyphs" xml:space="preserve">Differences </text>
<text x="204.8" y="549.2" font-family="Liberation Sans" font-size="12.6" fill="#000000" stroke="#000000" stroke-width="0.12" textLength="47.8" lengthAdjust="spacingAndGlyphs" xml:space="preserve">detected.</text></svg></body></html>
